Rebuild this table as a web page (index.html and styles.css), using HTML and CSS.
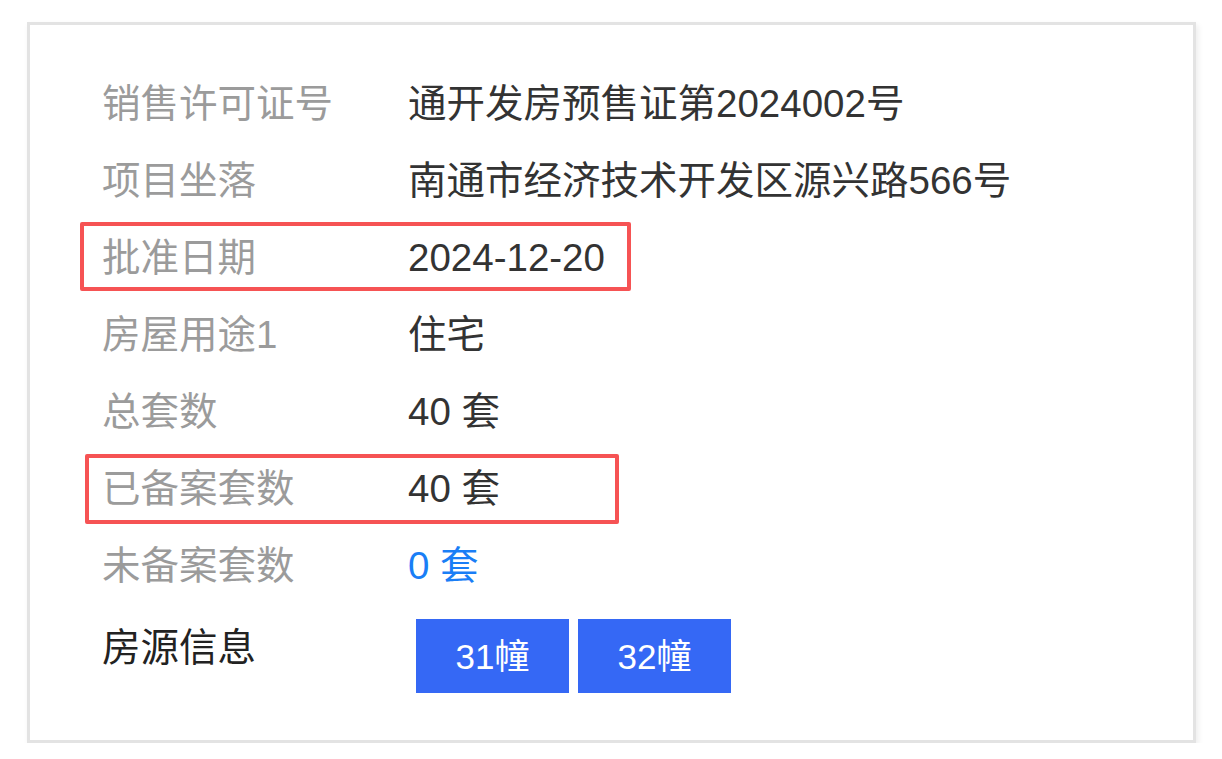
FILE: index.html
```html
<!DOCTYPE html>
<html lang="zh-CN">
<head>
  <meta charset="UTF-8">
  <meta name="viewport" content="width=device-width, initial-scale=1.0">
  <title>预售许可证信息</title>
  <link rel="stylesheet" href="styles.css">
</head>
<body>
  <div class="card">
    <div class="row"><span class="label">销售许可证号</span><span class="value">通开发房预售证第2024002号</span></div>
    <div class="row"><span class="label">项目坐落</span><span class="value">南通市经济技术开发区源兴路566号</span></div>
    <div class="row"><span class="label">批准日期</span><span class="value">2024-12-20</span></div>
    <div class="row"><span class="label">房屋用途1</span><span class="value">住宅</span></div>
    <div class="row"><span class="label">总套数</span><span class="value">40 套</span></div>
    <div class="row"><span class="label">已备案套数</span><span class="value">40 套</span></div>
    <div class="row"><span class="label">未备案套数</span><span class="value link">0 套</span></div>
    <div class="row houses">
      <span class="label dark">房源信息</span>
      <div class="buttons">
        <span class="btn">31幢</span>
        <span class="btn">32幢</span>
      </div>
    </div>

    <div class="mark mark-date"></div>
    <div class="mark mark-filed"></div>
  </div>
</body>
</html>
```

FILE: styles.css
```css
body {
  margin: 0;
  background: #fff;
  font-family: "Liberation Sans", "Noto Sans CJK SC", sans-serif;
}

.card {
  position: relative;
  box-sizing: border-box;
  width: 1169px;
  height: 721px;
  margin: 22px 0 0 27px;
  padding: 41px 0 0 72px;
  border: 3px solid #e3e3e3;
  box-shadow: 2px 3px 6px rgba(0, 0, 0, 0.08);
  background: #fff;
}

.row {
  display: flex;
  align-items: center;
  height: 77px;
  font-size: 38.5px;
  line-height: 1;
}

.label {
  width: 306px;
  flex: none;
  color: #9b9b9b;
}

.label.dark {
  color: #222;
}

.value {
  color: #333;
}

.value.link {
  color: #1a7ef6;
}

.houses {
  align-items: flex-start;
  height: auto;
  margin-top: 14px;
}

.houses .label {
  padding-top: 10px;
}

.buttons {
  display: flex;
  gap: 9px;
  margin-left: 8px;
}

.btn {
  display: flex;
  align-items: center;
  justify-content: center;
  width: 153px;
  height: 74px;
  background: #3568f5;
  color: #fff;
  font-size: 35px;
}

.mark {
  position: absolute;
  border: 4px solid #f65354;
  border-radius: 2px;
}

.mark-date {
  left: 50px;
  top: 197px;
  width: 543px;
  height: 61px;
}

.mark-filed {
  left: 55px;
  top: 429px;
  width: 526px;
  height: 62px;
}
```
